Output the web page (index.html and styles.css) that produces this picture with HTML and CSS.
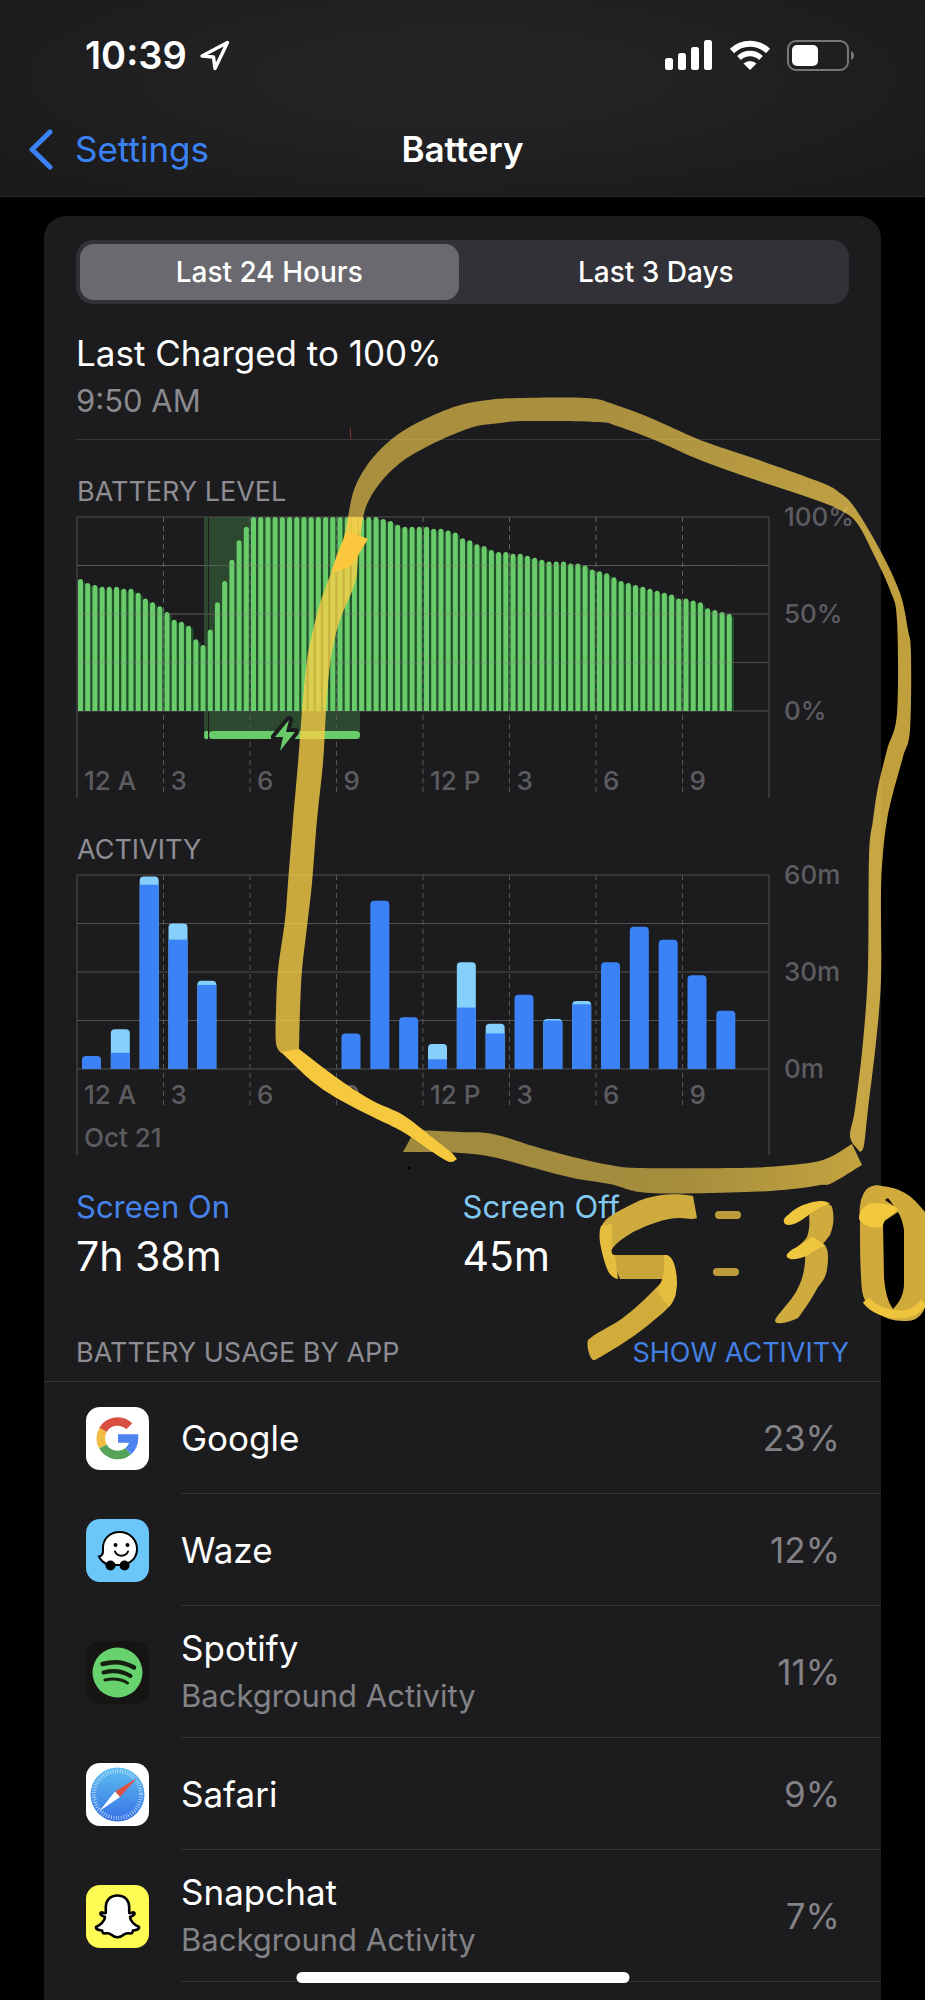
FILE: index.html
```html
<!DOCTYPE html>
<html lang="en">
<head>
  <meta charset="UTF-8" />
  <meta name="viewport" content="width=device-width, initial-scale=1.0" />
  <title>Battery</title>
  <link rel="stylesheet" href="styles.css">
</head>
<body>
  <header class="top">
    <div class="status">
      <div class="clock">
        <span>10:39</span>
        <svg width="31" height="31" viewBox="0 0 31 31" aria-hidden="true">
          <path d="M28.500 2.500 L3 16 L14.500 17 L16 28.500 Z" fill="none" stroke="#fff" stroke-width="3.400" stroke-linejoin="round"/>
        </svg>
      </div>
      <div class="indicators">
        <svg width="48" height="30" viewBox="0 0 48 30" fill="#fff" aria-hidden="true">
          <rect x="0" y="18" width="8" height="12" rx="2.500"/>
          <rect x="13" y="13" width="8" height="17" rx="2.500"/>
          <rect x="26" y="7" width="8" height="23" rx="2.500"/>
          <rect x="39" y="0" width="8" height="30" rx="2.500"/>
        </svg>
        <svg width="42" height="30" viewBox="0 0 42 30" aria-hidden="true">
          <path d="M3 11 A26 26 0 0 1 39 11" fill="none" stroke="#fff" stroke-width="6"/>
          <path d="M10 18 A16 16 0 0 1 32 18" fill="none" stroke="#fff" stroke-width="5.500"/>
          <path d="M21 30 L14.500 23.500 A9.500 9.500 0 0 1 27.500 23.500 Z" fill="#fff"/>
        </svg>
        <svg width="68" height="31" viewBox="0 0 68 31" aria-hidden="true">
          <rect x="1" y="1" width="60" height="29" rx="8" fill="none" stroke="#77777a" stroke-width="2"/>
          <rect x="5" y="5" width="26" height="21" rx="5" fill="#fff"/>
          <path d="M64 11 Q67 12.500 67 15.500 Q67 18.500 64 20 Z" fill="#77777a"/>
        </svg>
      </div>
    </div>
    <nav class="navbar">
      <a class="back" href="#settings">
        <svg width="25" height="41" viewBox="0 0 25 41" aria-hidden="true">
          <path d="M22 3 L4 20.500 L22 38" fill="none" stroke="#3b82f6" stroke-width="5" stroke-linecap="round" stroke-linejoin="round"/>
        </svg>
        Settings
      </a>
      <h1>Battery</h1>
    </nav>
  </header>

  <main class="card">
    <div class="segments">
      <button class="segment active" type="button">Last 24 Hours</button>
      <button class="segment" type="button">Last 3 Days</button>
    </div>

    <section class="charged">
      <p class="charged-title">Last Charged to 100%</p>
      <p class="charged-time">9:50 AM</p>
    </section>

    <section class="chart-block">
      <h2>BATTERY LEVEL</h2>
      <svg class="chart" id="levelChart" viewBox="0 0 805 292" role="img" aria-label="Battery level"></svg>
    </section>

    <section class="chart-block activity">
      <h2>ACTIVITY</h2>
      <svg class="chart" id="activityChart" viewBox="0 0 805 290" role="img" aria-label="Activity"></svg>
    </section>

    <section class="totals">
      <div>
        <p class="label on">Screen On</p>
        <p class="value">7h 38m</p>
      </div>
      <div>
        <p class="label off">Screen Off</p>
        <p class="value">45m</p>
      </div>
    </section>

    <section>
      <div class="usage-head">
        <h2>BATTERY USAGE BY APP</h2>
        <button class="show-activity" type="button">SHOW ACTIVITY</button>
      </div>
      <ul class="apps">
        <li>
          <svg class="icon" viewBox="0 0 63 63" aria-hidden="true">
            <rect width="63" height="63" rx="14" fill="#fff"/>
            <g fill="none" stroke-width="8.500">
              <path d="M43.300 19.200 A16.700 16.700 0 0 0 17 23" stroke="#d94f41"/>
              <path d="M17 23 A16.700 16.700 0 0 0 17 39.500" stroke="#f0bb40"/>
              <path d="M17 39.500 A16.700 16.700 0 0 0 42.200 44.200" stroke="#55a45a"/>
              <path d="M42.200 44.200 A16.700 16.700 0 0 0 48 31.500 H32" stroke="#4e82ee"/>
            </g>
          </svg>
          <div class="row">
            <p class="name">Google</p>
            <p class="percent">23%</p>
          </div>
        </li>
        <li>
          <svg class="icon" viewBox="0 0 63 63" aria-hidden="true">
            <rect width="63" height="63" rx="14" fill="#6bc7fa"/>
            <path d="M17 31 C16 20 24 13 33.500 13 C43.500 13 51 20.500 51 30 C51 39.500 43.500 46 34 46 H24 C19 45 15 42 13 37.500 C16.500 37 17.300 35 17 31 Z" fill="#fff" stroke="#000" stroke-width="2"/>
            <circle cx="24.500" cy="46.500" r="5" fill="#000"/>
            <circle cx="38.500" cy="46.500" r="5" fill="#000"/>
            <circle cx="29.500" cy="26" r="2" fill="#000"/>
            <circle cx="41.500" cy="26" r="2" fill="#000"/>
            <path d="M29 32.500 C31 38 40 38 42 32.500" fill="none" stroke="#000" stroke-width="2" stroke-linecap="round"/>
          </svg>
          <div class="row">
            <p class="name">Waze</p>
            <p class="percent">12%</p>
          </div>
        </li>
        <li>
          <svg class="icon" viewBox="0 0 63 63" aria-hidden="true">
            <rect width="63" height="63" rx="14" fill="#171414"/>
            <circle cx="31.500" cy="31.500" r="25" fill="#68d26f"/>
            <g fill="none" stroke="#14210f" stroke-linecap="round">
              <path d="M16.500 23 C27 20 39 21 48 26.500" stroke-width="4.500"/>
              <path d="M17.500 31.500 C27 29 36.500 30 44.500 35" stroke-width="4"/>
              <path d="M19 39 C27 37.300 35 38 41.500 42" stroke-width="3"/>
            </g>
          </svg>
          <div class="row">
            <div>
              <p class="name">Spotify</p>
              <p class="detail">Background Activity</p>
            </div>
            <p class="percent">11%</p>
          </div>
        </li>
        <li>
          <svg class="icon" viewBox="0 0 63 63" aria-hidden="true">
            <defs>
              <linearGradient id="safariBlue" x1="0" y1="0" x2="0" y2="1">
                <stop offset="0" stop-color="#5fc0f0"/>
                <stop offset="1" stop-color="#3670e6"/>
              </linearGradient>
            </defs>
            <rect width="63" height="63" rx="14" fill="#fff"/>
            <circle cx="31.500" cy="31.500" r="27" fill="url(#safariBlue)"/>
            <circle cx="31.500" cy="31.500" r="23.500" fill="none" stroke="#cfe6fb" stroke-width="4" stroke-dasharray="0.700 1.800"/>
            <path d="M51 15 L29 28.500 L34 34 Z" fill="#dd5348"/>
            <path d="M13.500 48 L29 28.500 L34 34 Z" fill="#fff"/>
          </svg>
          <div class="row">
            <p class="name">Safari</p>
            <p class="percent">9%</p>
          </div>
        </li>
        <li>
          <svg class="icon" viewBox="0 0 63 63" aria-hidden="true">
            <rect width="63" height="63" rx="14" fill="#fdfb54"/>
            <path d="M31.500 10.500 C24 10.500 19.800 15.500 19.800 22 V28 C18 28.500 16.500 27 15 27.500 C13.500 28.500 15 30.500 19 32 C19 36 14 40.500 10 42 C9.500 44.500 13 45 16 45.500 C16.500 47 16.500 48.500 18 48.500 C21 48 23 48 25 49.500 C29 53 34 53 38 49.500 C40 48 42 48 45 48.500 C46.500 48.500 46.500 47 47 45.500 C50 45 53.500 44.500 53 42 C49 40.500 44 36 44 32 C48 30.500 49.500 28.500 48 27.500 C46.500 27 45 28.500 43.200 28 V22 C43.200 15.500 39 10.500 31.500 10.500 Z" fill="#fff" stroke="#000" stroke-width="2.600" stroke-linejoin="round"/>
          </svg>
          <div class="row">
            <div>
              <p class="name">Snapchat</p>
              <p class="detail">Background Activity</p>
            </div>
            <p class="percent">7%</p>
          </div>
        </li>
      </ul>
    </section>
  </main>

  <!-- marker drawing over the page -->
  <svg class="ink" viewBox="0 0 925 2000" aria-hidden="true">
    <defs>
      <linearGradient id="loopInk" gradientUnits="userSpaceOnUse" x1="600" y1="400" x2="860" y2="640">
        <stop offset="0" stop-color="#f8d050" stop-opacity="0.640"/>
        <stop offset="1" stop-color="#facf50" stop-opacity="0.770"/>
      </linearGradient>
      <linearGradient id="baseInk" gradientUnits="userSpaceOnUse" x1="403" y1="0" x2="862" y2="0">
        <stop offset="0" stop-color="#9f8a3e"/>
        <stop offset="0.600" stop-color="#a58d3d"/>
        <stop offset="1" stop-color="#c4a33f"/>
      </linearGradient>
    </defs>
    <path id="loopTop" fill="url(#loopInk)"/>
    <path id="loopSide" fill="#fad046" fill-opacity="0.780"/>
    <path fill="#fcc93e" d="M348 531 L368 539 L357 557 L350 567 L331 573 C336 557 341 543 348 531 Z"/>
    <path id="loopBase" fill="url(#baseInk)"/>
    <path id="loopTail" fill="#f5c83d"/>
    <path fill="#cfab3d" d="M693 1196 L697 1218 C692 1220 686 1218 680 1218 C664 1218 648 1225 633 1232 C625 1237 617 1242 612 1249 L601 1227 C605 1219 610 1216 617 1212 C628 1206 637 1201 647 1198 C661 1194 678 1193 693 1196 Z"/>
    <path fill="#c9a53b" d="M610 1255 H668 V1279 H620 Z"/>
    <path fill="#d1ac3b" d="M588 1340 C596 1333 607 1328 617 1322 C630 1313 640 1304 647 1297 L664 1280 L676 1294 C672 1306 664 1312 653 1321 C638 1334 618 1347 595 1360 C590 1362 586 1345 588 1340 Z"/>
    <path fill="#e6be3f" d="M601 1226 L612 1224 V1249 C611 1252 612 1255 615 1255 L618 1279 C609 1277 607 1269 605 1263 C602 1252 597 1237 601 1226 Z"/>
    <path fill="#e6be3f" d="M664 1255 C671 1254 674 1262 675 1267 C679 1282 677 1299 669 1307 L656 1290 C662 1283 665 1275 664 1255 Z"/>
    <path d="M719 1215 H737 M717 1272 H735" fill="none" stroke="#bd9b3a" stroke-width="8" stroke-linecap="round"/>
    <path fill="#cfab3d" d="M809 1215 C818 1205 830 1201 832 1207 C835 1218 833 1228 830 1235 L823 1244 C830 1248 828 1261 827 1270 C825 1279 822 1282 818 1287 C811 1300 804 1310 798 1318 C791 1321 784 1324 777 1323 C773 1322 776 1317 780 1313 C786 1305 793 1298 797 1290 C803 1279 806 1266 805 1250 L797 1247 C802 1243 805 1240 807 1237 C809 1231 810 1225 809 1215 Z"/>
    <path fill="#efc63f" d="M785 1224 C782 1220 785 1217 788 1215 C793 1210 798 1207 803 1205 C811 1202 825 1198 830 1204 C820 1206 813 1212 806 1217 C799 1222 791 1227 785 1224 Z"/>
    <path fill="#efc63f" d="M787 1257 C785 1255 790 1250 797 1247 C803 1243 808 1240 812 1237 C818 1239 821 1243 826 1246 C819 1247 812 1253 804 1257 C798 1259 790 1261 787 1257 Z"/>
    <path fill="#d0ab3c" fill-rule="evenodd" d="M860 1220 C859 1211 860 1205 861 1200 C864 1191 867 1188 870 1187 C874 1185 878 1185 882 1186 C891 1187 898 1189 903 1192 C913 1197 919 1205 925 1212 V1307 C923 1313 920 1316 917 1318 C913 1321 908 1321 903 1321 C893 1321 885 1318 877 1313 C868 1308 863 1299 862 1290 C860 1270 860 1240 860 1220 Z M883 1222 L884 1277 C885 1292 888 1302 893 1309 C900 1302 904 1294 904 1283 V1230 C903 1223 901 1217 898 1212 Z M885 1200 L888 1198 L894 1206 Z"/>
    <path fill="#f2c93c" d="M859 1219 C859 1214 861 1209 866 1206 C871 1202 878 1203 885 1204 C890 1205 895 1206 898 1209 C895 1214 888 1216 885 1220 L882 1227 C873 1229 863 1226 859 1219 Z"/>
    <path d="M866 1300 C872 1308 883 1313 895 1314 C906 1316 917 1312 924 1302" fill="none" stroke="#eec43d" stroke-width="8"/>
    <path d="M350 427 L351 439" stroke="#84352f" stroke-width="1"/>
    <circle cx="409" cy="1168" r="1.500" fill="#000"/>
  </svg>

  <div class="home-bar"></div>

  <script>
    const level = [
      68, 66, 65, 64, 64, 64, 63, 63, 61, 58, 56, 54, 51, 47, 46, 44, 37, 34, 42, 56, 67, 78, 88, 95,
      100, 100, 100, 100, 100, 100, 100, 100, 100, 100, 100, 100, 100, 100, 100, 100, 100, 100,
      99, 98, 96, 95, 95, 95, 95, 94, 94, 93, 92, 89, 88, 86, 85, 83, 82, 82, 81, 81, 80, 79, 78,
      77, 77, 77, 76, 76, 75, 73, 72, 71, 69, 67, 66, 65, 64, 63, 62, 61, 60, 58, 58, 57, 56, 53, 52, 51, 50
    ];

    // [hour, screen on minutes, total minutes]
    const activity = [
      [0, 4, 4], [1, 5, 12.3], [2, 57, 59.5], [3, 40, 45], [4, 26, 27.3],
      [9, 11, 11], [10, 52, 52], [11, 16, 16], [12, 3, 7.7], [13, 19, 33], [14, 11, 14],
      [15, 23, 23], [16, 15, 15.5], [17, 20, 21], [18, 33, 33], [19, 44, 44], [20, 40, 40],
      [21, 29, 29], [22, 18, 18]
    ];

    const left = 1;
    const top0 = 9;
    const plotWidth = 692;
    const plotHeight = 194;
    const base = top0 + plotHeight;
    const hours = ['12 A', '3', '6', '9', '12 P', '3', '6', '9'];

    function line(x1, y1, x2, y2, cls) {
      return `<line class="${cls}" x1="${x1}" y1="${y1}" x2="${x2}" y2="${y2}"/>`;
    }

    function topRounded(x, y, w, bottom, r, cls) {
      return `<path class="${cls}" d="M${x} ${bottom}V${y + r}Q${x} ${y} ${x + r} ${y}H${x + w - r}Q${x + w} ${y} ${x + w} ${y + r}V${bottom}Z"/>`;
    }

    function drawGrid(labels, sideEnd, dashEnd, textY) {
      let out = '';
      for (let i = 0; i <= 4; i++) {
        const y = top0 + plotHeight * i / 4;
        out += line(left, y, left + plotWidth, y, 'grid');
      }
      out += line(left, top0, left, sideEnd, 'grid');
      out += line(left + plotWidth, top0, left + plotWidth, sideEnd, 'grid');
      hours.forEach((text, i) => {
        const x = left + plotWidth * i / 8;
        if (i > 0) out += line(x, top0, x, dashEnd, 'dash');
        out += `<text x="${x + 7}" y="${textY}">${text}</text>`;
      });
      labels.forEach((text, i) => {
        out += `<text x="708" y="${top0 + 9 + plotHeight * i / 2}">${text}</text>`;
      });
      return out;
    }

    function drawLevel() {
      const step = plotWidth / 96;
      let out = '<rect class="charging" x="128" y="9" width="4" height="222"/>';
      out += '<rect class="charging" x="133" y="9" width="151" height="222"/>';
      let bars = '';
      level.forEach((value, i) => {
        const h = plotHeight * value / 100;
        const x = left + i * step + 1;
        out += `<rect class="shade" x="${x}" y="${base - h + 3}" width="${step}" height="${h - 3}"/>`;
        bars += topRounded(x, base - h, 5, base, 2.5, 'level');
      });
      out += drawGrid(['100%', '50%', '0%'], 290, 285, 282) + bars;
      for (let i = 1; i < 4; i++) {
        const y = top0 + plotHeight * i / 4;
        out += line(left, y, left + 655, y, 'faint');
      }
      for (let i = 1; i < 8; i++) {
        const x = left + plotWidth * i / 8;
        out += line(x, top0, x, base, 'faint dashed');
      }
      out += '<path class="level" d="M132 223V231H130Q128 231 128 227Q128 223 130 223Z"/>';
      out += '<rect class="level" x="133" y="223" width="151" height="8" rx="4"/>';
      out += '<path class="bolt" d="M213 212L199 229H207L204 243L219 224H210Z"/>';
      document.getElementById('levelChart').innerHTML = out;
    }

    function drawActivity() {
      const step = plotWidth / 24;
      let out = drawGrid(['60m', '30m', '0m'], 289, 242, 238);
      activity.forEach(([hour, on, total]) => {
        const x = left + hour * step + 5;
        const onHeight = plotHeight * on / 60;
        const y = base - plotHeight * total / 60;
        out += topRounded(x, y, 19, base, 4, total > on ? 'off-bar' : 'on-bar');
        if (total > on) {
          const split = Math.max(base - onHeight, y + 1);
          out += total - on < 1
            ? topRounded(x, split, 19, base, 3, 'on-bar')
            : `<rect class="on-bar" x="${x}" y="${split}" width="19" height="${base - split}"/>`;
        }
      });
      out += '<text x="8" y="281">Oct 21</text>';
      document.getElementById('activityChart').innerHTML = out;
    }

    // marker strokes: two edges of points, each joined by a smooth curve
    const strokes = {
      loopTop: [
        [[348, 517], [353, 493], [362, 473], [377, 453], [397, 435], [423, 420], [457, 406], [488, 400], [520, 398], [587, 398],
         [613, 404], [653, 419], [700, 440], [753, 458], [820, 482], [840, 493], [855, 508], [880, 550], [900, 593],
         [908, 630], [911, 653], [910, 730], [903, 757], [893, 793], [887, 820], [883, 853], [881, 894], [881, 979],
         [876, 1042], [868, 1109], [864, 1145], [860, 1152]],
        [[853, 1144], [850, 1134], [855, 1109], [863, 1042], [868, 968], [869, 857], [873, 820], [878, 787], [887, 750],
         [897, 713], [897, 620], [890, 590], [873, 553], [857, 523], [840, 510], [813, 499], [753, 479], [700, 460],
         [657, 441], [617, 426], [597, 422], [527, 421], [500, 423], [470, 428], [430, 445], [400, 463], [380, 483], [368, 502], [363, 517],
         [358, 534], [348, 531]]
      ],
      loopSide: [
        [[348, 517], [343, 540], [331, 573], [320, 603], [313, 630], [307, 660], [302, 711], [298, 763], [293, 820], [288, 883],
         [285, 920], [278, 970], [276, 1010], [276, 1043], [281, 1053]],
        [[299, 1050], [300, 1010], [302, 970], [307, 927], [312, 883], [317, 820], [323, 763], [326, 711], [329, 673],
         [333, 647], [340, 620], [355, 583], [358, 560], [363, 517]]
      ],
      loopBase: [
        [[415, 1130], [460, 1132], [493, 1134], [533, 1146], [573, 1157], [610, 1165], [640, 1168], [737, 1168], [780, 1166], [823, 1160], [852, 1144]],
        [[862, 1165], [832, 1183], [820, 1185], [793, 1189], [747, 1192], [650, 1193], [610, 1184], [573, 1178], [530, 1167],
         [493, 1157], [460, 1153], [403, 1152]]
      ],
      loopTail: [
        [[281, 1052], [313, 1082], [340, 1100], [373, 1117], [403, 1132], [437, 1155], [450, 1162], [457, 1159]],
        [[452, 1153], [433, 1138], [403, 1115], [373, 1101], [340, 1080], [299, 1049]]
      ]
    };

    function smooth(points) {
      let d = '';
      for (let i = 0; i < points.length - 1; i++) {
        const p0 = points[Math.max(i - 1, 0)];
        const p1 = points[i];
        const p2 = points[i + 1];
        const p3 = points[Math.min(i + 2, points.length - 1)];
        d += `C${p1[0] + (p2[0] - p0[0]) / 6} ${p1[1] + (p2[1] - p0[1]) / 6} `;
        d += `${p2[0] - (p3[0] - p1[0]) / 6} ${p2[1] - (p3[1] - p1[1]) / 6} ${p2[0]} ${p2[1]}`;
      }
      return d;
    }

    function drawInk() {
      for (const id in strokes) {
        const [outer, inner] = strokes[id];
        const d = `M${outer[0].join(' ')}${smooth(outer)}L${inner[0].join(' ')}${smooth(inner)}Z`;
        document.getElementById(id).setAttribute('d', d);
      }
    }

    drawLevel();
    drawActivity();
    drawInk();
  </script>
</body>
</html>
```

FILE: styles.css
```css
* {
  box-sizing: border-box;
}

body {
  position: relative;
  margin: 0;
  background-color: #000;
  color: #fff;
  font-family: Inter, "Liberation Sans", sans-serif;
  overflow-x: hidden;
}

h1,
h2,
p,
ul {
  margin: 0;
  padding: 0;
}

button {
  border: 0;
  padding: 0;
  background: none;
  color: inherit;
  font-family: inherit;
  cursor: pointer;
}

svg {
  display: block;
}

.top {
  height: 197px;
  padding-top: 31px;
  background: radial-gradient(ellipse at 50% 40%, #242426 20%, #19191a 100%);
  border-bottom: 1px solid #2b2b2d;
}

.status {
  display: flex;
  justify-content: space-between;
  align-items: center;
  height: 48px;
  padding: 0 70px 0 85px;
}

.clock {
  display: flex;
  align-items: center;
  gap: 12px;
  font-size: 38px;
  font-weight: 600;
}

.indicators {
  display: flex;
  align-items: center;
  gap: 16px;
}

.navbar {
  display: grid;
  grid-template-columns: 1fr auto 1fr;
  align-items: center;
  height: 48px;
  margin-top: 46px;
  padding: 0 28px;
}

.navbar h1 {
  font-size: 35px;
  font-weight: 600;
  line-height: 48px;
}

.back {
  display: flex;
  align-items: center;
  gap: 22px;
  color: #3b82f6;
  font-size: 35px;
  line-height: 48px;
  text-decoration: none;
}

.card {
  margin: 19px 44px 0;
  padding: 24px 0 18px;
  background-color: #1c1c1e;
  border-radius: 22px 22px 0 0;
}

.segments {
  display: flex;
  height: 64px;
  margin: 0 32px;
  padding: 4px;
  background-color: #323137;
  border-radius: 17px;
}

.segment {
  flex: 1;
  border-radius: 14px;
  font-size: 28px;
  font-weight: 500;
}

.segment.active {
  margin-right: 8px;
  background-color: #6a696f;
}

.charged {
  margin-left: 32px;
  padding: 27px 0 16px;
  border-bottom: 1px solid #38383a;
  line-height: 44px;
}

.charged-title {
  font-size: 35px;
}

.charged-time {
  margin-top: 4px;
  color: #8a8a8e;
  font-size: 31px;
}

h2 {
  color: #8d8d93;
  font-size: 27px;
  font-weight: 400;
  line-height: 32px;
}

.chart-block {
  margin-left: 32px;
  padding-top: 36px;
}

.chart-block.activity {
  padding-top: 34px;
}

.chart-block h2 {
  padding-left: 1px;
}

.chart {
  width: 100%;
  height: auto;
  overflow: visible;
}

.chart text {
  fill: #5c5c60;
  font-size: 26px;
  font-weight: 500;
}

.grid {
  stroke: #505053;
  stroke-width: 1;
}

.dash {
  stroke: #56565a;
  stroke-width: 1;
  stroke-dasharray: 5 4;
}

.faint {
  stroke: #707070;
  stroke-opacity: 0.3;
}

.dashed {
  stroke-dasharray: 5 4;
}

.charging {
  fill: #2c482f;
}

.shade {
  fill: #1f5029;
}

.level {
  fill: #6acb6b;
}

.bolt {
  fill: #6acb6b;
  stroke: #1c1c1e;
  stroke-width: 8;
  stroke-linejoin: round;
  paint-order: stroke;
}

.on-bar {
  fill: #3b82f7;
}

.off-bar {
  fill: #84cffb;
}

.totals {
  display: grid;
  grid-template-columns: 1fr 1fr;
  margin: 31px 32px 0;
}

.label {
  font-size: 31px;
  line-height: 40px;
}

.label.on {
  color: #4583ea;
}

.label.off {
  color: #82c9f1;
}

.value {
  margin-top: 4px;
  font-size: 41px;
  line-height: 50px;
}

.usage-head {
  display: flex;
  justify-content: space-between;
  margin-top: 56px;
  padding: 0 32px 12px;
  border-bottom: 1px solid #323234;
}

.show-activity {
  color: #4380e6;
  font-size: 27px;
  line-height: 32px;
}

.apps {
  list-style: none;
}

.apps li {
  display: flex;
  align-items: center;
  gap: 32px;
  padding-left: 42px;
}

.icon {
  width: 63px;
  height: 63px;
}

.row {
  display: flex;
  flex: 1;
  justify-content: space-between;
  align-items: center;
  min-height: 112px;
  padding: 20px 41px 19px 0;
  border-bottom: 1px solid #323234;
  line-height: 44px;
}

.name {
  font-size: 35px;
}

.detail {
  margin-top: 4px;
  color: #828286;
  font-size: 31px;
}

.percent {
  color: #828286;
  font-size: 35px;
}

.ink {
  position: absolute;
  top: 0;
  left: 0;
  width: 100%;
  height: auto;
  pointer-events: none;
}

.home-bar {
  position: fixed;
  bottom: 17px;
  left: 50%;
  width: 36%;
  height: 11px;
  background-color: #fff;
  border-radius: 6px;
  transform: translateX(-50%);
}
```
